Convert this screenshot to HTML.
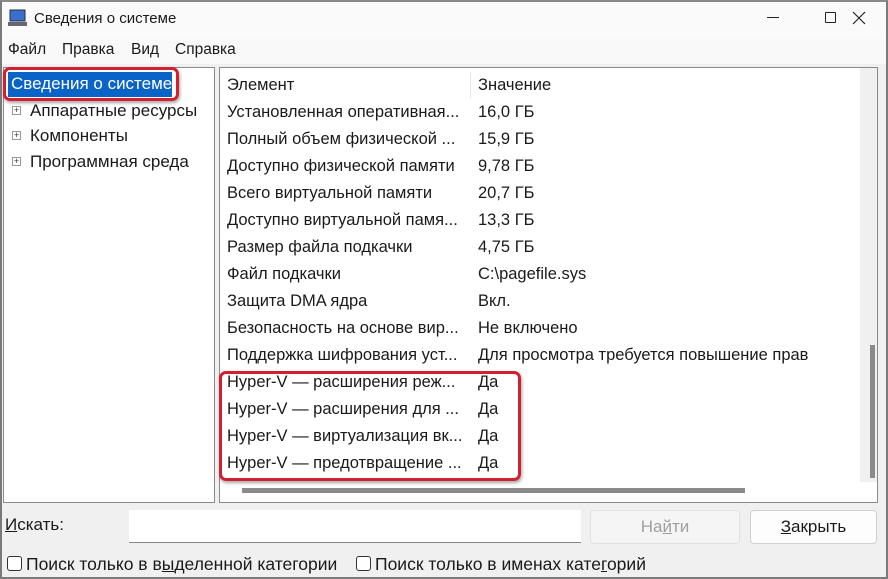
<!DOCTYPE html>
<html><head><meta charset="utf-8"><style>
*{box-sizing:border-box;margin:0;padding:0}
body{width:888px;height:579px;background:#f0f0f0;font-family:"Liberation Sans",sans-serif;font-size:16.5px;color:#1a1a1a;position:relative;overflow:hidden}
.abs{position:absolute;white-space:nowrap}
#win{position:absolute;left:0;top:0;width:888px;height:579px;border:2px solid #7a7a7a;border-top:2px solid #8a8a8a}
#title{position:absolute;left:0;top:0;width:888px;height:36px;background:#fafafa}
#menu{position:absolute;left:0;top:36px;width:888px;height:28px;background:#f9f9f9}
.panel{position:absolute;background:#fff;border:1px solid #8a8a8a}
.row{position:absolute;left:8px;height:27px;line-height:27px}
.v{position:absolute;left:251px}
.red{position:absolute;border:3px solid #d22030;border-radius:7px;box-shadow:1px 2px 3px rgba(0,0,0,.35)}
.btn{position:absolute;border:1px solid #d0d0d0;border-radius:4px;background:#fdfdfd;text-align:center;line-height:32px;font-size:17px}
.cb{position:absolute;width:15px;height:15px;border:1px solid #333;border-radius:3px;background:#fff}
.pl{position:absolute;width:9px;height:9px;border:1px solid #999;font-size:9px;line-height:7px;text-align:center;color:#333}
</style></head><body>
<div id="title"></div><div id="menu"></div>
<svg class="abs" style="left:8px;top:9px" width="20" height="18"><rect x="2" y="1" width="15" height="11" fill="#3a6fd0" stroke="#233" stroke-width="1"/><rect x="0" y="13" width="19" height="4" fill="#667"/></svg>
<div class="abs" style="left:34px;top:10px;font-size:15px">Сведения о системе</div>
<div class="abs" style="left:767px;top:17px;width:12px;height:1px;background:#222"></div>
<div class="abs" style="left:825px;top:12px;width:11px;height:11px;border:1px solid #222;border-radius:1px"></div>
<svg class="abs" style="left:852px;top:11px" width="14" height="14"><path d="M1 1L13 13M13 1L1 13" stroke="#222" stroke-width="1.2"/></svg>
<div class="abs" style="left:8px;top:41px;font-size:15.5px">Файл</div>
<div class="abs" style="left:62px;top:41px;font-size:15.5px">Правка</div>
<div class="abs" style="left:131px;top:41px;font-size:15.5px">Вид</div>
<div class="abs" style="left:175px;top:41px;font-size:15.5px">Справка</div>

<div class="panel" style="left:3px;top:67px;width:212px;height:436px"></div>
<div class="abs" style="left:8px;top:72px;width:164px;height:25px;background:#0a64c8"></div>
<div class="abs" style="left:11px;top:74px;color:#fff;font-size:17px">Сведения о системе</div>
<div class="red" style="left:3px;top:67px;width:176px;height:34px"></div>
<div class="pl" style="left:12px;top:106px">+</div><div class="abs" style="left:30px;top:101px;font-size:17px">Аппаратные ресурсы</div>
<div class="pl" style="left:12px;top:131px">+</div><div class="abs" style="left:30px;top:126px;font-size:17px">Компоненты</div>
<div class="pl" style="left:12px;top:157px">+</div><div class="abs" style="left:30px;top:152px;font-size:17px">Программная среда</div>

<div class="panel" style="left:219px;top:67px;width:659px;height:436px"></div>
<div class="abs" style="left:470px;top:72px;width:1px;height:26px;background:#e5e5e5"></div>
<div class="abs" style="left:860px;top:68px;width:17px;height:414px;background:#f0f0f0"></div>
<div class="abs" style="left:870px;top:345px;width:5px;height:133px;background:#8a8a8a"></div>
<div class="abs" style="left:242px;top:488px;width:503px;height:5px;background:#8a8a8a"></div>
<div class="abs" style="left:219px;top:72px;width:640px">
<div class="row" style="top:0">Элемент<span class="v">Значение</span></div>
<div class="row" style="top:27px">Установленная оперативная...<span class="v">16,0 ГБ</span></div>
<div class="row" style="top:54px">Полный объем физической ...<span class="v">15,9 ГБ</span></div>
<div class="row" style="top:81px">Доступно физической памяти<span class="v">9,78 ГБ</span></div>
<div class="row" style="top:108px">Всего виртуальной памяти<span class="v">20,7 ГБ</span></div>
<div class="row" style="top:135px">Доступно виртуальной памя...<span class="v">13,3 ГБ</span></div>
<div class="row" style="top:162px">Размер файла подкачки<span class="v">4,75 ГБ</span></div>
<div class="row" style="top:189px">Файл подкачки<span class="v">C:\pagefile.sys</span></div>
<div class="row" style="top:216px">Защита DMA ядра<span class="v">Вкл.</span></div>
<div class="row" style="top:243px">Безопасность на основе вир...<span class="v">Не включено</span></div>
<div class="row" style="top:270px">Поддержка шифрования уст...<span class="v">Для просмотра требуется повышение прав</span></div>
<div class="row" style="top:297px">Hyper-V — расширения реж...<span class="v">Да</span></div>
<div class="row" style="top:324px">Hyper-V — расширения для ...<span class="v">Да</span></div>
<div class="row" style="top:351px">Hyper-V — виртуализация вк...<span class="v">Да</span></div>
<div class="row" style="top:378px">Hyper-V — предотвращение ...<span class="v">Да</span></div>
</div>
<div class="red" style="left:219px;top:371px;width:302px;height:110px"></div>

<div class="abs" style="left:5px;top:515px;font-size:17px"><u>И</u>скать:</div>
<div class="abs" style="left:129px;top:510px;width:452px;height:33px;background:#fff;border-bottom:1px solid #888"></div>
<div class="btn" style="left:590px;top:510px;width:150px;height:34px;background:#f5f5f5;color:#a0a0a0;border-color:#e0e0e0">На<u>й</u>ти</div>
<div class="btn" style="left:750px;top:510px;width:127px;height:34px"><u>З</u>акрыть</div>
<div class="cb" style="left:7px;top:556px"></div>
<div class="abs" style="left:26px;top:554px;font-size:17.5px">Поиск только в в<u>ы</u>деленной категории</div>
<div class="cb" style="left:356px;top:556px"></div>
<div class="abs" style="left:375px;top:554px;font-size:17.5px">Поиск только в именах кате<u>г</u>орий</div>
<div id="win"></div>
</body></html>
